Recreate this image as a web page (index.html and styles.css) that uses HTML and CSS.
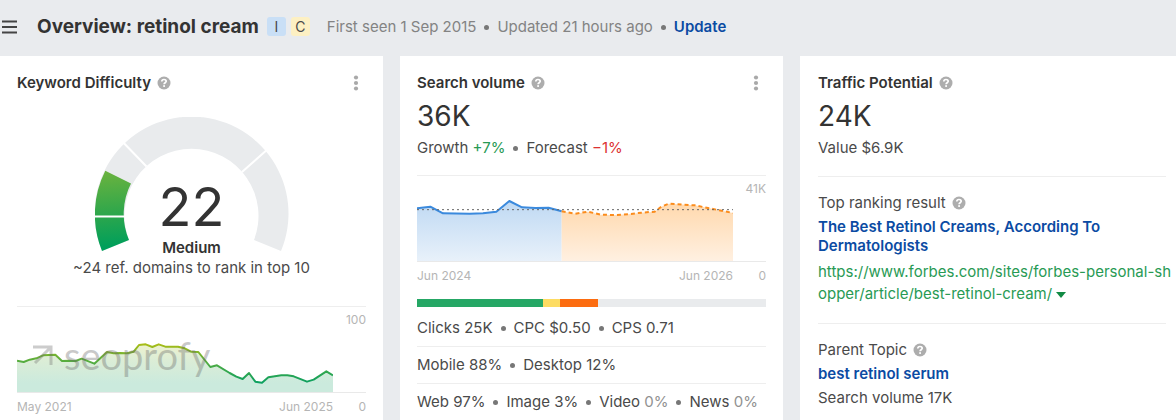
FILE: index.html
```html
<!DOCTYPE html>
<html lang="en">
<head>
<meta charset="utf-8">
<title>Overview: retinol cream</title>
<link rel="stylesheet" href="styles.css">
</head>
<body>
<svg class="defs" aria-hidden="true">
  <symbol id="help" viewBox="0 0 14 14">
    <circle cx="7" cy="7" r="6.5" fill="#adadad"/>
    <path d="M4.800 5.600C4.800 4.300 5.700 3.500 7 3.500s2.200.7 2.200 1.800c0 1.400-2.100 1.500-2.100 2.900" fill="none" stroke="#fff" stroke-width="1.700"/>
    <rect x="6.200" y="9.200" width="1.800" height="1.700" fill="#fff"/>
  </symbol>
  <symbol id="dots" viewBox="0 0 6 16">
    <circle cx="3" cy="2.5" r="2.1" fill="#a9a9a9"/><circle cx="3" cy="8" r="2.1" fill="#a9a9a9"/><circle cx="3" cy="13.5" r="2.1" fill="#a9a9a9"/>
  </symbol>
</svg>

<header class="topbar">
  <button class="icon-button menu" aria-label="Menu">
    <svg width="18" height="14" viewBox="0 0 18 14"><path d="M2 1.5h15M2 7h15M2 12.5h15" stroke="#444" stroke-width="2"/></svg>
  </button>
  <h1 class="title">Overview: retinol cream</h1>
  <span class="badge badge-info">I</span>
  <span class="badge badge-commercial">C</span>
  <p class="meta">First seen 1 Sep 2015<i class="dot"></i>Updated 21 hours ago<i class="dot"></i><a class="link" href="#">Update</a></p>
</header>

<main class="cards">
  <section class="card">
    <div class="card-head">
      <h2 class="card-title">Keyword Difficulty</h2>
      <svg class="help"><use href="#help"/></svg>
      <button class="icon-button more" aria-label="More"><svg width="6" height="16"><use href="#dots"/></svg></button>
    </div>
    <div class="gauge">
      <svg class="gauge-arc" viewBox="95 117 194 135" width="194" height="135">
        <defs>
          <linearGradient id="arc" gradientUnits="userSpaceOnUse" x1="112" y1="170" x2="118" y2="246">
            <stop offset="0" stop-color="#6cb33e"/><stop offset=".55" stop-color="#30a74b"/><stop offset="1" stop-color="#009f5b"/>
          </linearGradient>
        </defs>
        <path d="M102 251A97 97 0 1 1 281 251L254 240A67 67 0 1 0 129 240Z" fill="#e9ebed"/>
        <path d="M102 251A97 97 0 0 1 105.300 170.700L131 183.500A67 67 0 0 0 129 240Z" fill="url(#arc)"/>
        <path d="M93 216.500H126M124 143.200L146.500 166.500M266.500 150.200L242 172" stroke="#fff" stroke-width="2"/>
      </svg>
      <div class="readout">
        <span class="score">22</span>
        <strong class="level">Medium</strong>
      </div>
    </div>
    <p class="caption">~24 ref. domains to rank in top 10</p>
    <div class="chart chart-history">
      <div class="plot-row">
        <svg class="plot" viewBox="52 37 948 255" preserveAspectRatio="none">
          <defs>
            <linearGradient id="kdLine" gradientUnits="userSpaceOnUse" x1="0" y1="148" x2="0" y2="265">
              <stop offset="0" stop-color="#a9bd16"/><stop offset=".4" stop-color="#5dae3c"/><stop offset="1" stop-color="#0ba061"/>
            </linearGradient>
            <linearGradient id="kdFill" gradientUnits="userSpaceOnUse" x1="0" y1="148" x2="0" y2="265">
              <stop offset="0" stop-color="#eef2ce"/><stop offset=".4" stop-color="#dcedd6"/><stop offset="1" stop-color="#cbeadd"/>
            </linearGradient>
          </defs>
          <path d="M52 198L72 202L90 195L110 191L130 182L167 180L187 199L208 198L228 199L246 192L284 207L322 172L342 176L362 175L382 176L402 171L418 151L438 149L458 157L477 149L497 156L535 156L555 161L574 171L596 172L632 217L652 212L690 235L710 246L729 253L748 235L767 261L787 264L806 248L845 242L863 242L882 245L922 261L942 255L980 230L1000 242V292H52Z" fill="url(#kdFill)"/>
          <path class="line" d="M52 198L72 202L90 195L110 191L130 182L167 180L187 199L208 198L228 199L246 192L284 207L322 172L342 176L362 175L382 176L402 171L418 151L438 149L458 157L477 149L497 156L535 156L555 161L574 171L596 172L632 217L652 212L690 235L710 246L729 253L748 235L767 261L787 264L806 248L845 242L863 242L882 245L922 261L942 255L980 230L1000 242" stroke="url(#kdLine)"/>
        </svg>
        <span class="axis-max">100</span>
        <div class="watermark">
          <svg width="20" height="20" viewBox="0 0 20 20"><path d="M0 2H18V20M2 18L17 3" fill="none" stroke="#707070" stroke-width="3"/></svg>
          <span class="watermark-text">seoprofy</span>
        </div>
      </div>
      <div class="axis"><span>May 2021</span><span class="axis-end">Jun 2025</span><span class="axis-zero">0</span></div>
    </div>
  </section>

  <section class="card">
    <div class="card-head">
      <h2 class="card-title">Search volume</h2>
      <svg class="help"><use href="#help"/></svg>
      <button class="icon-button more" aria-label="More"><svg width="6" height="16"><use href="#dots"/></svg></button>
    </div>
    <p class="figure">36K</p>
    <p class="text">Growth <span class="up">+7%</span><i class="dot"></i>Forecast <span class="down">−1%</span></p>
    <div class="chart chart-volume">
      <div class="plot-row">
        <svg class="plot" viewBox="52 33 948 255" preserveAspectRatio="none">
          <defs>
            <linearGradient id="blue" x1="0" y1="0" x2="0" y2="1"><stop offset="0" stop-color="#bfd9f3"/><stop offset="1" stop-color="#e8f1fa"/></linearGradient>
            <linearGradient id="orange" x1="0" y1="0" x2="0" y2="1"><stop offset="0" stop-color="#ffd9ae"/><stop offset="1" stop-color="#fff0e1"/></linearGradient>
          </defs>
          <path d="M52 130L92 125L130 145L210 146L250 145L290 140L329 108L367 127L407 129L447 128L486 139V288H52Z" fill="url(#blue)"/>
          <path d="M486 139L527 146L565 140L603 149L645 150L685 148L725 143L765 140L785 125L808 116L885 121L940 132L970 138L1000 144V288H486Z" fill="url(#orange)"/>
          <path class="line actual" d="M52 130L92 125L130 145L210 146L250 145L290 140L329 108L367 127L407 129L447 128L486 139"/>
          <path class="line forecast" d="M486 139L527 146L565 140L603 149L645 150L685 148L725 143L765 140L785 125L808 116L885 121L940 132L970 138L1000 144"/>
          <path class="line average" d="M52 134H1000"/>
        </svg>
        <span class="axis-max">41K</span>
      </div>
      <div class="axis"><span>Jun 2024</span><span class="axis-end">Jun 2026</span><span class="axis-zero">0</span></div>
    </div>
    <div class="split">
      <span class="split-green" style="width:36%"></span><span class="split-yellow" style="width:5%"></span><span class="split-orange" style="width:11%"></span>
    </div>
    <p class="stat">Clicks 25K<i class="dot"></i>CPC $0.50<i class="dot"></i>CPS 0.71</p>
    <p class="stat">Mobile 88%<i class="dot"></i>Desktop 12%</p>
    <p class="stat">Web 97%<i class="dot"></i>Image 3%<i class="dot"></i>Video <span class="muted">0%</span><i class="dot"></i>News <span class="muted">0%</span></p>
  </section>

  <section class="card card-last">
    <div class="card-head">
      <h2 class="card-title">Traffic Potential</h2>
      <svg class="help"><use href="#help"/></svg>
    </div>
    <p class="figure">24K</p>
    <p class="text">Value $6.9K</p>
    <div class="block">
      <p class="label">Top ranking result <svg class="help"><use href="#help"/></svg></p>
      <a class="link result" href="#">The Best Retinol Creams, According To Dermatologists</a>
      <a class="url" href="#">https://www.forbes.com/sites/forbes-personal-shopper/article/best-retinol-cream/ <svg width="10" height="6" viewBox="0 0 10 6"><path d="M0 0H10L5 6Z" fill="#118a44"/></svg></a>
    </div>
    <div class="block">
      <p class="label">Parent Topic <svg class="help"><use href="#help"/></svg></p>
      <a class="link topic" href="#">best retinol serum</a>
      <p class="text">Search volume 17K</p>
    </div>
  </section>
</main>
</body>
</html>
```
FILE: styles.css
```css
* { box-sizing: border-box; }
html { height: 100%; overflow: hidden; }
body {
  margin: 0;
  min-height: 100%;
  display: flex;
  flex-direction: column;
  background: #e9ebee;
  color: #4a4a4a;
  font: 15px/20px Inter, "Liberation Sans", sans-serif;
}
h1, h2, p { margin: 0; }
a { text-decoration: none; }
.defs { position: absolute; width: 0; height: 0; }

.icon-button { display: flex; padding: 0; border: 0; background: none; }
.help { flex: none; width: 14px; height: 14px; }
.dot {
  display: inline-block;
  width: 5px;
  height: 5px;
  margin: 0 8px;
  border-radius: 50%;
  background: #777;
  vertical-align: 2px;
}
.link { color: #0b4ba3; font-weight: 600; }
.muted { color: #919191; }
.up { color: #289a54; }
.down { color: #dc3232; }

.topbar { display: flex; align-items: center; height: 56px; padding-bottom: 3px; }
.title { margin: 0 8px 0 19px; font-size: 19px; line-height: 24px; font-weight: 700; color: #333; }
.badge {
  width: 19px;
  height: 19px;
  margin-right: 5px;
  border-radius: 3px;
  font-size: 14px;
  line-height: 19px;
  text-align: center;
}
.badge-info { background: #c9dff6; }
.badge-commercial { background: #fdf0c3; }
.meta { margin-left: 12px; color: #838383; white-space: nowrap; }

.cards { flex: 1; display: grid; grid-template-columns: 383fr 383fr 376fr; gap: 17px; }
.card { min-width: 0; padding: 17px 17px 0; background: #fff; }
.card-last { padding-right: 10px; padding-left: 18px; }
.card-head { display: flex; align-items: center; gap: 6px; }
.card-title { font-size: 15px; line-height: 20px; font-weight: 600; color: #333; }
.more { margin-left: auto; margin-right: 7px; }
.figure { margin: 6px 0 5px; font-size: 28px; line-height: 34px; color: #333; }

.gauge { display: grid; justify-items: center; margin-top: 24px; height: 141px; }
.gauge > * { grid-area: 1 / 1; }
.readout { align-self: end; display: flex; flex-direction: column; align-items: center; }
.score { font-size: 54px; line-height: 62px; color: #333; }
.level { font-weight: 600; color: #333; }
.caption { text-align: center; }

.chart { border-top: 1px solid #eee; color: #b5b5b5; font-size: 12px; }
.chart-history { margin-top: 28px; }
.chart-volume { margin-top: 17px; }
.plot-row { position: relative; display: flex; border-bottom: 1px solid #e9e9e9; }
.plot { display: block; flex: 1; min-width: 0; height: 85px; }
.axis-max { width: 33px; padding-top: 3px; text-align: right; }
.axis { display: flex; padding-top: 4px; }
.axis-end { margin-left: auto; }
.axis-zero { width: 33px; text-align: right; }
.line { fill: none; stroke-width: 2px; stroke-linejoin: round; vector-effect: non-scaling-stroke; }
.actual { stroke: #3b8add; }
.forecast { stroke: #fb8c1c; stroke-width: 2px; stroke-dasharray: 4 3; }
.average { stroke: #666; stroke-width: 1px; stroke-dasharray: 2 3; }
.watermark {
  position: absolute;
  left: 16px;
  bottom: 17px;
  display: flex;
  align-items: center;
  gap: 11px;
  opacity: .35;
}
.watermark-text { font: 400 38px/40px Lato, sans-serif; color: #666; }

.split { display: flex; height: 8px; margin-top: 13px; margin-bottom: 3px; background: #e9ebed; }
.split-green { background: #25a765; }
.split-yellow { background: #fddc62; }
.split-orange { background: #fc6c10; }
.stat { padding: 8px 0; white-space: nowrap; }
.stat + .stat { border-top: 1px solid #eee; }

.block { margin-top: 18px; padding-top: 16px; border-top: 1px solid #eee; }
.block .help { margin-left: 2px; vertical-align: -2px; }
.result { display: block; margin: 4px 0 6px; line-height: 19px; }
.url { display: block; margin-right: -8px; color: #289a54; line-height: 22px; word-break: break-all; }
.url svg { vertical-align: 1px; }
.topic { display: block; margin: 4px 0; }
```
